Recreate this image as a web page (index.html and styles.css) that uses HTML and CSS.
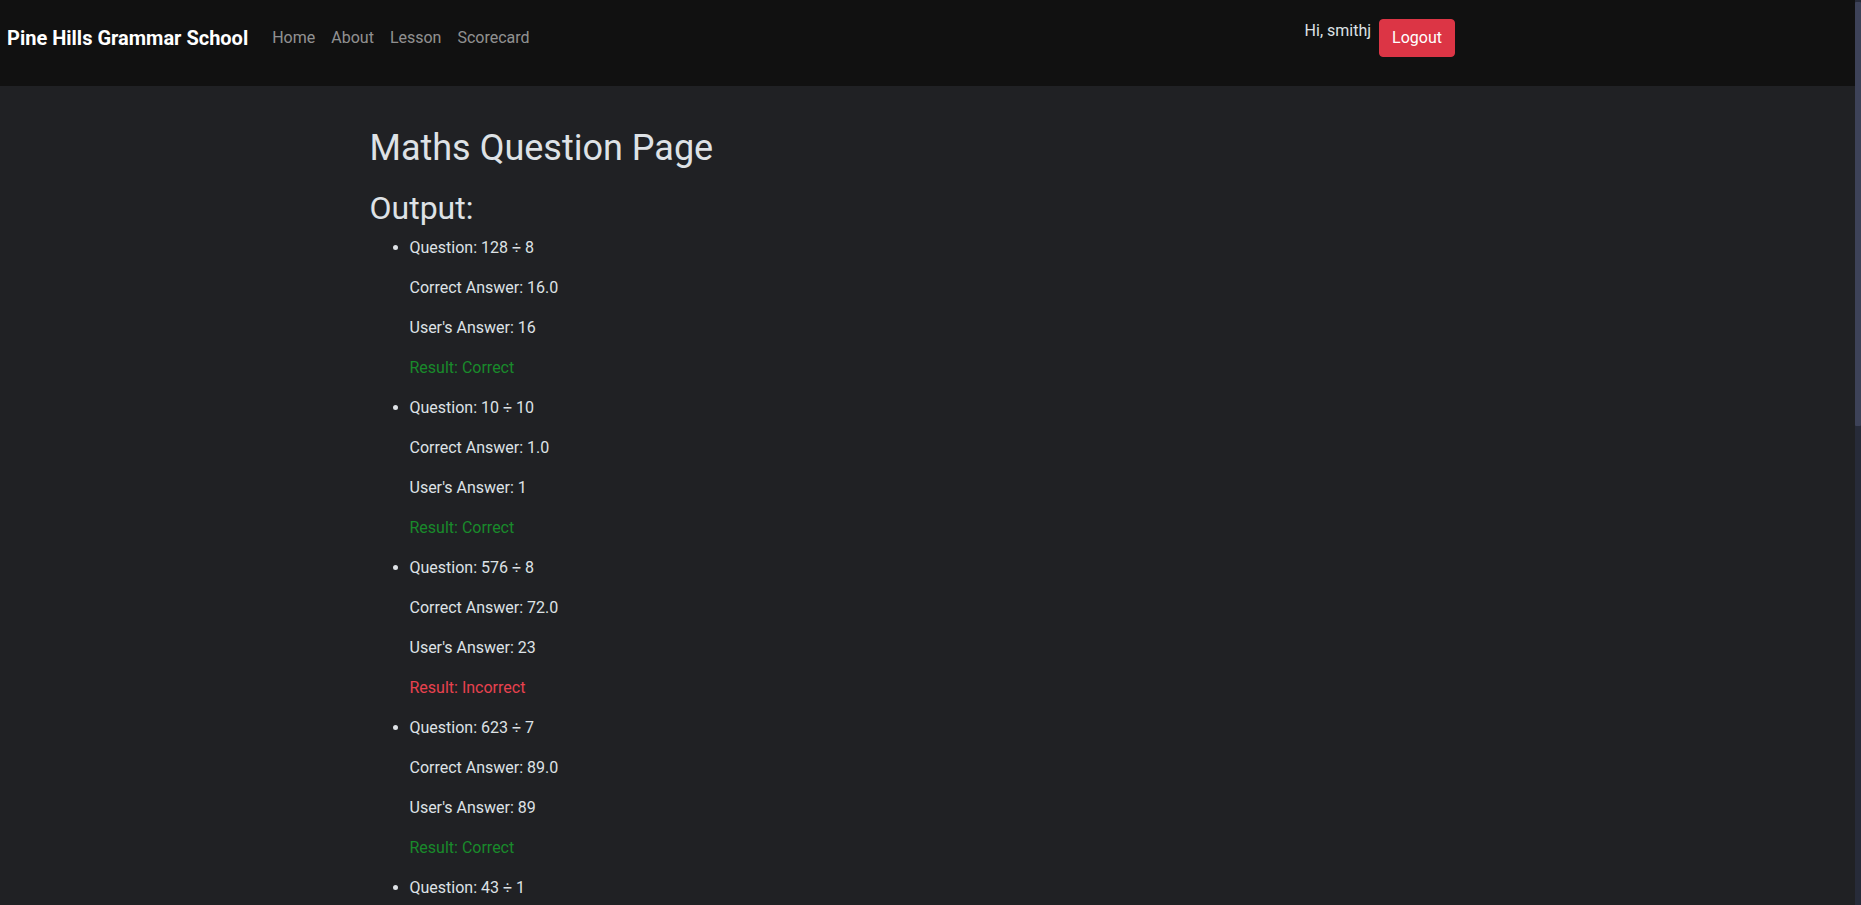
FILE: index.html
```html
<!DOCTYPE html>
<html lang="en">
<head>
<meta charset="utf-8">
<title>Maths Question Page</title>
<link rel="stylesheet" href="styles.css">
</head>
<body>
<nav class="navbar">
  <a class="brand" href="#">Pine Hills Grammar School</a>
  <ul class="nav-links">
    <li><a href="#">Home</a></li>
    <li><a href="#">About</a></li>
    <li><a href="#">Lesson</a></li>
    <li><a href="#">Scorecard</a></li>
  </ul>
  <div class="user">
    <span class="greeting">Hi, smithj</span>
    <button class="btn-logout">Logout</button>
  </div>
</nav>
<main class="container">
  <h1>Maths Question Page</h1>
  <h2>Output:</h2>
  <ul class="results">
    <li>
      <p>Question: 128 ÷ 8</p>
      <p>Correct Answer: 16.0</p>
      <p>User's Answer: 16</p>
      <p class="ok">Result: Correct</p>
    </li>
    <li>
      <p>Question: 10 ÷ 10</p>
      <p>Correct Answer: 1.0</p>
      <p>User's Answer: 1</p>
      <p class="ok">Result: Correct</p>
    </li>
    <li>
      <p>Question: 576 ÷ 8</p>
      <p>Correct Answer: 72.0</p>
      <p>User's Answer: 23</p>
      <p class="bad">Result: Incorrect</p>
    </li>
    <li>
      <p>Question: 623 ÷ 7</p>
      <p>Correct Answer: 89.0</p>
      <p>User's Answer: 89</p>
      <p class="ok">Result: Correct</p>
    </li>
    <li>
      <p>Question: 43 ÷ 1</p>
    </li>
  </ul>
</main>
<div class="scrollbar" aria-hidden="true"><div class="scroll-thumb"></div></div>
</body>
</html>
```
FILE: styles.css
```css
* { box-sizing: border-box; }

body {
  margin: 0;
  padding-right: 6px;
  background: #202124;
  color: #dee2e6;
  font-family: Roboto, "Liberation Sans", sans-serif;
  font-size: 16px;
  line-height: 1.5;
}

.navbar {
  display: flex;
  align-items: flex-start;
  height: 86px;
  padding: 19px 400px 0 7px;
  background: #111111;
}

.brand {
  color: #ffffff;
  font-size: 20px;
  font-weight: 700;
  line-height: 38px;
  text-decoration: none;
  margin-right: 16px;
}

.nav-links {
  display: flex;
  list-style: none;
  margin: 0;
  padding: 0;
  flex: 1;
}

.nav-links a {
  display: block;
  padding: 7px 8px;
  color: rgba(255, 255, 255, 0.55);
  text-decoration: none;
  line-height: 24px;
}

.user {
  display: flex;
  align-items: flex-start;
  gap: 8px;
}

.greeting {
  color: #dee2e6;
  line-height: 24px;
}

.btn-logout {
  height: 38px;
  padding: 6px 12px;
  border: 1px solid #dc3545;
  border-radius: 4px;
  background: #dc3545;
  color: #ffffff;
  font-family: inherit;
  font-size: 16px;
  line-height: 24px;
}

.container {
  max-width: 1140px;
  margin: 0 auto;
  padding: 0 12px;
}

h1 {
  margin: 41px 0 19px;
  font-size: 36px;
  font-weight: 400;
  line-height: 1.2;
}

h2 {
  margin: 0 0 8px;
  font-size: 32px;
  font-weight: 400;
  line-height: 1.2;
}

.results {
  margin: 0;
  padding-left: 40px;
}

.results p {
  margin: 0 0 16px;
}

.ok { color: #198a2b; }
.bad { color: #e8424f; }

.scrollbar {
  position: fixed;
  top: 0;
  right: 0;
  width: 6px;
  height: 100vh;
  background: #272b39;
}

.scroll-thumb {
  margin-top: 2px;
  height: 424px;
  background: #3d4258;
  border-radius: 1px;
}
```
